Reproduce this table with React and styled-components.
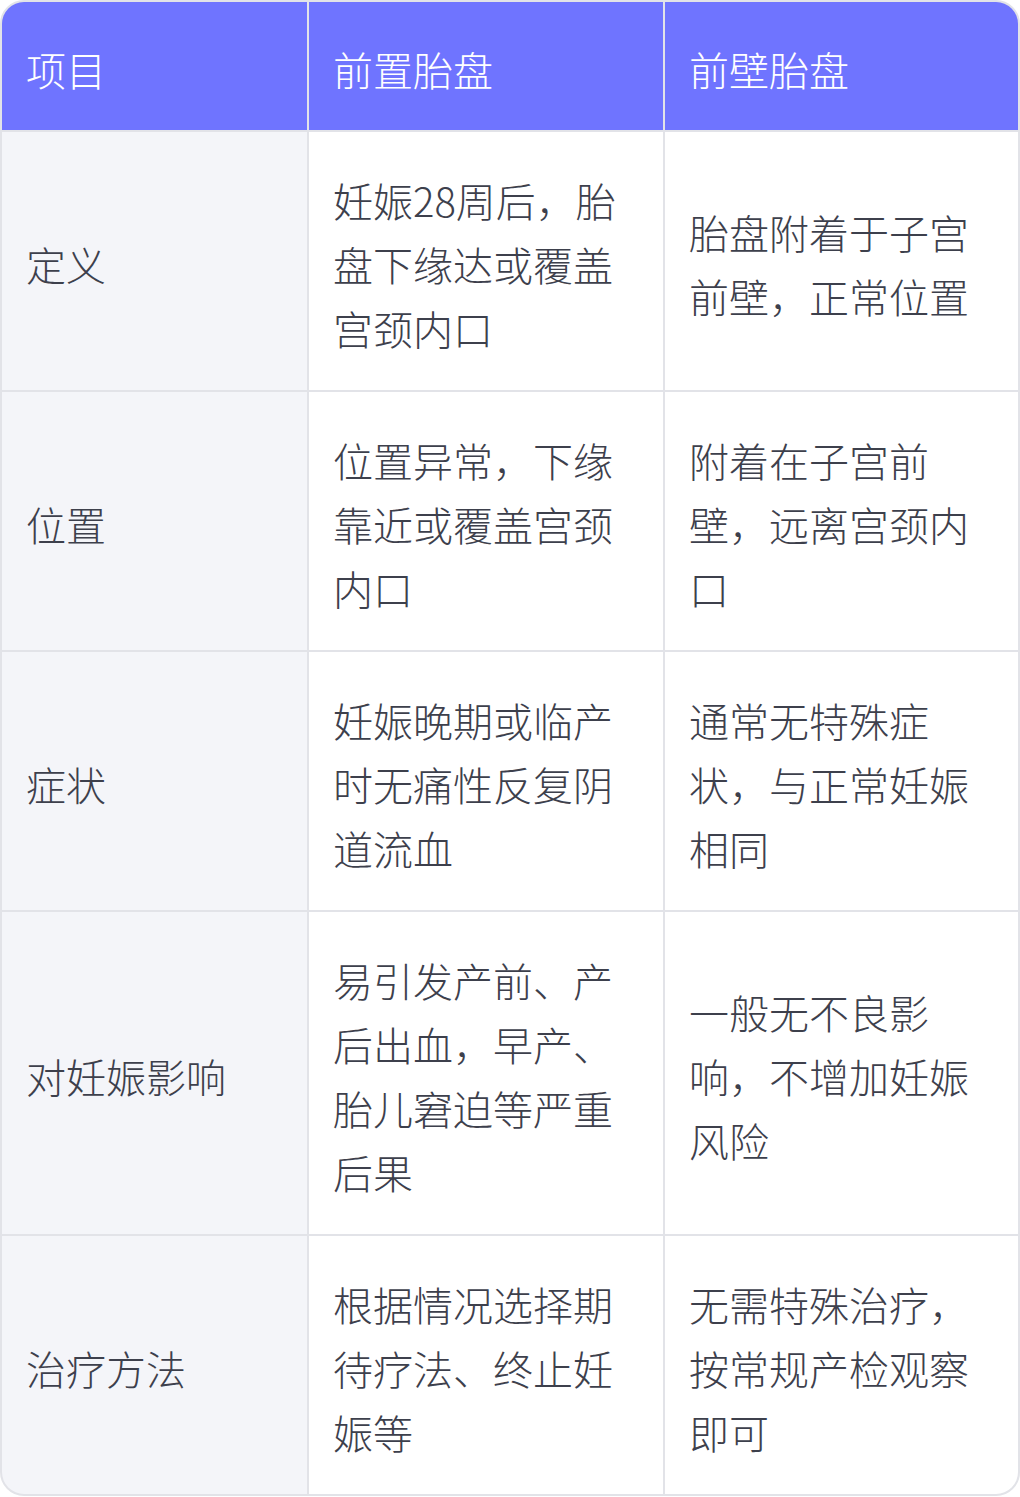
import React from 'react';
import styled, { createGlobalStyle } from 'styled-components';

const GlobalStyle = createGlobalStyle`
  html, body {
    margin: 0;
    padding: 0;
    background: #ffffff;
  }
  body {
    font-family: "Noto Sans CJK SC", "Noto Sans", sans-serif;
  }
`;

const Table = styled.div`
  width: 1020px;
  box-sizing: border-box;
  display: grid;
  grid-template-columns: 305px 354px 353px;
  gap: 2px;
  background: #e2e3e8;
  border: 2px solid #e2e3e8;
  border-radius: 24px;
  overflow: hidden;
`;

const HeadCell = styled.div`
  background: #6f74ff;
  color: #ffffff;
  font-size: 40px;
  line-height: 64px;
  font-weight: 300;
  padding: 35px 24px 29px;
`;

const Cell = styled.div`
  background: ${p => (p.$label ? '#f4f5f9' : '#ffffff')};
  color: #3d404c;
  font-size: 40px;
  line-height: 64px;
  font-weight: 300;
  padding: 36px 24px 30px;
  display: flex;
  align-items: center;
  word-break: break-all;
`;

const headers = ['项目', '前置胎盘', '前壁胎盘'];

const rows = [
  ['定义', '妊娠28周后，胎盘下缘达或覆盖宫颈内口', '胎盘附着于子宫前壁，正常位置'],
  ['位置', '位置异常，下缘靠近或覆盖宫颈内口', '附着在子宫前壁，远离宫颈内口'],
  ['症状', '妊娠晚期或临产时无痛性反复阴道流血', '通常无特殊症状，与正常妊娠相同'],
  ['对妊娠影响', '易引发产前、产后出血，早产、胎儿窘迫等严重后果', '一般无不良影响，不增加妊娠风险'],
  ['治疗方法', '根据情况选择期待疗法、终止妊娠等', '无需特殊治疗，按常规产检观察即可'],
];

export default function App() {
  return (
    <>
      <GlobalStyle />
      <Table>
        {headers.map(h => (
          <HeadCell key={h}>{h}</HeadCell>
        ))}
        {rows.map(r =>
          r.map((c, i) => (
            <Cell key={r[0] + i} $label={i === 0}>
              <span>{c}</span>
            </Cell>
          ))
        )}
      </Table>
    </>
  );
}
